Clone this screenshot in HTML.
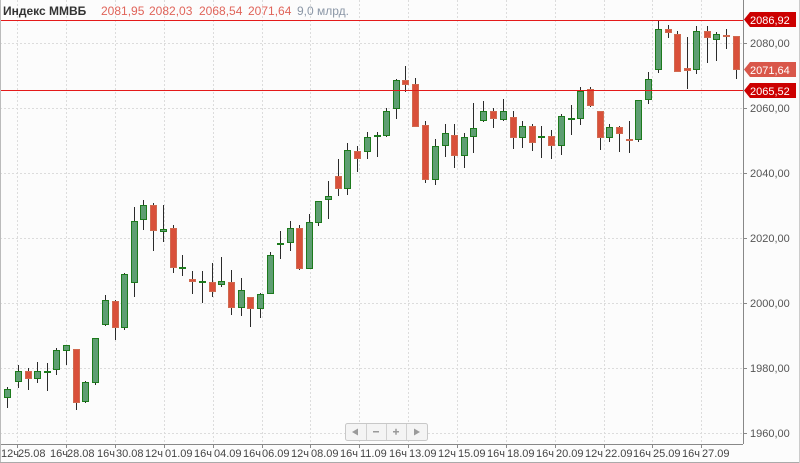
<!DOCTYPE html>
<html><head><meta charset="utf-8"><style>
html,body{margin:0;padding:0;background:#fcfcfc;}
svg{display:block;font-family:"Liberation Sans",Arial,sans-serif;}
.w{stroke:#2a2a2a;stroke-width:1}
.g{fill:#5e9e72;stroke:#1c7a1c;stroke-width:1}
.r{fill:#d9503a;stroke:#d06a50;stroke-width:1}
.ax{fill:#555;font-size:11px}
.bx{fill:#444;font-size:11px}
</style></head><body>
<svg width="800" height="463" viewBox="0 0 800 463" xmlns="http://www.w3.org/2000/svg">
<rect x="0" y="0" width="800" height="463" fill="#fcfcfc"/>
<g stroke="#dcdcdc" stroke-dasharray="2,2" stroke-width="1">
<line x1="0" y1="43.5" x2="743" y2="43.5"/><line x1="0" y1="108.5" x2="743" y2="108.5"/><line x1="0" y1="173.5" x2="743" y2="173.5"/><line x1="0" y1="238.5" x2="743" y2="238.5"/><line x1="0" y1="303.5" x2="743" y2="303.5"/><line x1="0" y1="368.5" x2="743" y2="368.5"/><line x1="0" y1="433.5" x2="743" y2="433.5"/>
<line x1="17.5" y1="0" x2="17.5" y2="444"/><line x1="66.5" y1="0" x2="66.5" y2="444"/><line x1="115.5" y1="0" x2="115.5" y2="444"/><line x1="164.5" y1="0" x2="164.5" y2="444"/><line x1="213.5" y1="0" x2="213.5" y2="444"/><line x1="262.5" y1="0" x2="262.5" y2="444"/><line x1="310.5" y1="0" x2="310.5" y2="444"/><line x1="359.5" y1="0" x2="359.5" y2="444"/><line x1="408.5" y1="0" x2="408.5" y2="444"/><line x1="457.5" y1="0" x2="457.5" y2="444"/><line x1="506.5" y1="0" x2="506.5" y2="444"/><line x1="555.5" y1="0" x2="555.5" y2="444"/><line x1="604.5" y1="0" x2="604.5" y2="444"/><line x1="652.5" y1="0" x2="652.5" y2="444"/><line x1="701.5" y1="0" x2="701.5" y2="444"/>
</g>
<!-- candles -->
<g>
<line class="w" x1="7.5" y1="387" x2="7.5" y2="408"/><rect class="g" x="4.5" y="389.5" width="6" height="8"/>
<line class="w" x1="18.5" y1="365" x2="18.5" y2="388"/><rect class="g" x="15.5" y="371.5" width="6" height="10"/>
<line class="w" x1="28.5" y1="368" x2="28.5" y2="390"/><rect class="r" x="25.5" y="371.5" width="6" height="7"/>
<line class="w" x1="37.5" y1="362" x2="37.5" y2="383"/><rect class="g" x="34.5" y="371.5" width="6" height="7"/>
<line class="w" x1="47.5" y1="363" x2="47.5" y2="391"/><rect class="g" x="44.5" y="371.5" width="6" height="1"/>
<line class="w" x1="56.5" y1="348" x2="56.5" y2="375"/><rect class="g" x="53.5" y="350.5" width="6" height="19"/>
<line class="w" x1="66.5" y1="345" x2="66.5" y2="365"/><rect class="g" x="63.5" y="345.5" width="6" height="5"/>
<line class="w" x1="76.5" y1="349" x2="76.5" y2="410"/><rect class="r" x="73.5" y="349.5" width="6" height="53"/>
<line class="w" x1="85.5" y1="381" x2="85.5" y2="403"/><rect class="g" x="82.5" y="382.5" width="6" height="19"/>
<line class="w" x1="95.5" y1="338" x2="95.5" y2="385"/><rect class="g" x="92.5" y="338.5" width="6" height="44"/>
<line class="w" x1="105.5" y1="295" x2="105.5" y2="326"/><rect class="g" x="102.5" y="300.5" width="6" height="24"/>
<line class="w" x1="115.5" y1="300" x2="115.5" y2="340"/><rect class="r" x="112.5" y="301.5" width="6" height="26"/>
<line class="w" x1="124.5" y1="273" x2="124.5" y2="330"/><rect class="g" x="121.5" y="274.5" width="6" height="53"/>
<line class="w" x1="134.5" y1="207" x2="134.5" y2="297"/><rect class="g" x="131.5" y="221.5" width="6" height="61"/>
<line class="w" x1="143.5" y1="200" x2="143.5" y2="230"/><rect class="g" x="140.5" y="205.5" width="6" height="14"/>
<line class="w" x1="153.5" y1="203" x2="153.5" y2="251"/><rect class="r" x="150.5" y="205.5" width="6" height="25"/>
<line class="w" x1="163.5" y1="205" x2="163.5" y2="242"/><rect class="g" x="160.5" y="229.5" width="6" height="2"/>
<line class="w" x1="173.5" y1="225" x2="173.5" y2="273"/><rect class="r" x="170.5" y="228.5" width="6" height="39"/>
<line class="w" x1="182.5" y1="255" x2="182.5" y2="276"/><rect class="g" x="179.5" y="267.5" width="6" height="1"/>
<line class="w" x1="192.5" y1="271" x2="192.5" y2="294"/><rect class="r" x="189.5" y="279.5" width="6" height="2"/>
<line class="w" x1="202.5" y1="271" x2="202.5" y2="303"/><rect class="g" x="199.5" y="281.5" width="6" height="1"/>
<line class="w" x1="212.5" y1="263" x2="212.5" y2="297"/><rect class="r" x="209.5" y="282.5" width="6" height="9"/>
<line class="w" x1="221.5" y1="257" x2="221.5" y2="287"/><rect class="g" x="218.5" y="281.5" width="6" height="3"/>
<line class="w" x1="231.5" y1="270" x2="231.5" y2="315"/><rect class="r" x="228.5" y="282.5" width="6" height="25"/>
<line class="w" x1="241.5" y1="278" x2="241.5" y2="316"/><rect class="g" x="238.5" y="290.5" width="6" height="17"/>
<line class="w" x1="250.5" y1="297" x2="250.5" y2="327"/><rect class="r" x="247.5" y="297.5" width="6" height="11"/>
<line class="w" x1="260.5" y1="293" x2="260.5" y2="318"/><rect class="g" x="257.5" y="294.5" width="6" height="14"/>
<line class="w" x1="270.5" y1="252" x2="270.5" y2="294"/><rect class="g" x="267.5" y="255.5" width="6" height="38"/>
<line class="w" x1="280.5" y1="231" x2="280.5" y2="259"/><rect class="g" x="277.5" y="243.5" width="6" height="1"/>
<line class="w" x1="290.5" y1="221" x2="290.5" y2="251"/><rect class="g" x="287.5" y="228.5" width="6" height="14"/>
<line class="w" x1="299.5" y1="225" x2="299.5" y2="270"/><rect class="r" x="296.5" y="228.5" width="6" height="40"/>
<line class="w" x1="309.5" y1="214" x2="309.5" y2="268"/><rect class="g" x="306.5" y="222.5" width="6" height="46"/>
<line class="w" x1="318.5" y1="201" x2="318.5" y2="226"/><rect class="g" x="315.5" y="201.5" width="6" height="21"/>
<line class="w" x1="328.5" y1="181" x2="328.5" y2="219"/><rect class="g" x="325.5" y="196.5" width="6" height="3"/>
<line class="w" x1="338.5" y1="159" x2="338.5" y2="196"/><rect class="r" x="335.5" y="176.5" width="6" height="12"/>
<line class="w" x1="347.5" y1="143" x2="347.5" y2="195"/><rect class="g" x="344.5" y="150.5" width="6" height="38"/>
<line class="w" x1="357.5" y1="146" x2="357.5" y2="172"/><rect class="r" x="354.5" y="151.5" width="6" height="7"/>
<line class="w" x1="367.5" y1="132" x2="367.5" y2="159"/><rect class="g" x="364.5" y="137.5" width="6" height="14"/>
<line class="w" x1="377.5" y1="132" x2="377.5" y2="157"/><rect class="g" x="374.5" y="135.5" width="6" height="1"/>
<line class="w" x1="386.5" y1="108" x2="386.5" y2="137"/><rect class="g" x="383.5" y="111.5" width="6" height="24"/>
<line class="w" x1="396.5" y1="79" x2="396.5" y2="119"/><rect class="g" x="393.5" y="80.5" width="6" height="28"/>
<line class="w" x1="405.5" y1="66" x2="405.5" y2="92"/><rect class="r" x="402.5" y="80.5" width="6" height="4"/>
<line class="w" x1="415.5" y1="78" x2="415.5" y2="126"/><rect class="r" x="412.5" y="84.5" width="6" height="42"/>
<line class="w" x1="425.5" y1="121" x2="425.5" y2="183"/><rect class="r" x="422.5" y="125.5" width="6" height="54"/>
<line class="w" x1="435.5" y1="139" x2="435.5" y2="185"/><rect class="g" x="432.5" y="146.5" width="6" height="33"/>
<line class="w" x1="445.5" y1="124" x2="445.5" y2="157"/><rect class="g" x="442.5" y="133.5" width="6" height="12"/>
<line class="w" x1="454.5" y1="124" x2="454.5" y2="168"/><rect class="r" x="451.5" y="135.5" width="6" height="20"/>
<line class="w" x1="464.5" y1="133" x2="464.5" y2="168"/><rect class="g" x="461.5" y="137.5" width="6" height="18"/>
<line class="w" x1="473.5" y1="103" x2="473.5" y2="153"/><rect class="g" x="470.5" y="128.5" width="6" height="8"/>
<line class="w" x1="483.5" y1="101" x2="483.5" y2="122"/><rect class="g" x="480.5" y="111.5" width="6" height="9"/>
<line class="w" x1="493.5" y1="108" x2="493.5" y2="128"/><rect class="r" x="490.5" y="111.5" width="6" height="7"/>
<line class="w" x1="503.5" y1="99" x2="503.5" y2="121"/><rect class="g" x="500.5" y="111.5" width="6" height="8"/>
<line class="w" x1="513.5" y1="111" x2="513.5" y2="149"/><rect class="r" x="510.5" y="117.5" width="6" height="20"/>
<line class="w" x1="522.5" y1="121" x2="522.5" y2="148"/><rect class="g" x="519.5" y="126.5" width="6" height="11"/>
<line class="w" x1="532.5" y1="124" x2="532.5" y2="151"/><rect class="r" x="529.5" y="126.5" width="6" height="16"/>
<line class="w" x1="541.5" y1="126" x2="541.5" y2="158"/><rect class="g" x="538.5" y="136.5" width="6" height="1"/>
<line class="w" x1="551.5" y1="130" x2="551.5" y2="159"/><rect class="r" x="548.5" y="136.5" width="6" height="9"/>
<line class="w" x1="561.5" y1="114" x2="561.5" y2="155"/><rect class="g" x="558.5" y="116.5" width="6" height="29"/>
<line class="w" x1="571.5" y1="105" x2="571.5" y2="135"/><rect class="g" x="568.5" y="118.5" width="6" height="1"/>
<line class="w" x1="580.5" y1="87" x2="580.5" y2="125"/><rect class="g" x="577.5" y="91.5" width="6" height="27"/>
<line class="w" x1="590.5" y1="87" x2="590.5" y2="107"/><rect class="r" x="587.5" y="89.5" width="6" height="16"/>
<line class="w" x1="600.5" y1="111" x2="600.5" y2="150"/><rect class="r" x="597.5" y="111.5" width="6" height="26"/>
<line class="w" x1="609.5" y1="124" x2="609.5" y2="142"/><rect class="g" x="606.5" y="127.5" width="6" height="10"/>
<line class="w" x1="619.5" y1="126" x2="619.5" y2="152"/><rect class="r" x="616.5" y="127.5" width="6" height="6"/>
<line class="w" x1="629.5" y1="121" x2="629.5" y2="153"/><rect class="r" x="626.5" y="139.5" width="6" height="1"/>
<line class="w" x1="638.5" y1="100" x2="638.5" y2="142"/><rect class="g" x="635.5" y="100.5" width="6" height="39"/>
<line class="w" x1="648.5" y1="72" x2="648.5" y2="104"/><rect class="g" x="645.5" y="79.5" width="6" height="20"/>
<line class="w" x1="658.5" y1="21" x2="658.5" y2="73"/><rect class="g" x="655.5" y="29.5" width="6" height="40"/>
<line class="w" x1="668.5" y1="25" x2="668.5" y2="38"/><rect class="r" x="665.5" y="29.5" width="6" height="3"/>
<line class="w" x1="677.5" y1="31" x2="677.5" y2="72"/><rect class="r" x="674.5" y="34.5" width="6" height="37"/>
<line class="w" x1="687.5" y1="37" x2="687.5" y2="89"/><rect class="r" x="684.5" y="68.5" width="6" height="2"/>
<line class="w" x1="696.5" y1="26" x2="696.5" y2="74"/><rect class="g" x="693.5" y="31.5" width="6" height="38"/>
<line class="w" x1="707.5" y1="26" x2="707.5" y2="63"/><rect class="r" x="704.5" y="31.5" width="6" height="6"/>
<line class="w" x1="716.5" y1="32" x2="716.5" y2="61"/><rect class="g" x="713.5" y="34.5" width="6" height="5"/>
<line class="w" x1="726.5" y1="29" x2="726.5" y2="49"/><rect class="r" x="723.5" y="35.5" width="6" height="1"/>
<line class="w" x1="736.5" y1="36" x2="736.5" y2="79"/><rect class="r" x="733.5" y="36.5" width="6" height="33"/>
</g>
<!-- red level lines -->
<line x1="0" y1="20.5" x2="743" y2="20.5" stroke="#e41a1a" stroke-width="1"/>
<line x1="0" y1="90.5" x2="743" y2="90.5" stroke="#e41a1a" stroke-width="1"/>
<!-- axes -->
<line x1="743.5" y1="0" x2="743.5" y2="444" stroke="#888"/>
<line x1="0" y1="444.5" x2="743" y2="444.5" stroke="#888"/>
<line x1="0.5" y1="0" x2="0.5" y2="463" stroke="#bbb"/>
<line x1="0" y1="462.5" x2="800" y2="462.5" stroke="#aaa"/>
<line x1="799.5" y1="0" x2="799.5" y2="463" stroke="#ccc"/>
<g stroke="#888">
<line x1="743" y1="43.5" x2="747" y2="43.5"/><line x1="743" y1="108.5" x2="747" y2="108.5"/><line x1="743" y1="173.5" x2="747" y2="173.5"/><line x1="743" y1="238.5" x2="747" y2="238.5"/><line x1="743" y1="303.5" x2="747" y2="303.5"/><line x1="743" y1="368.5" x2="747" y2="368.5"/><line x1="743" y1="433.5" x2="747" y2="433.5"/>
<line x1="17.5" y1="444" x2="17.5" y2="448"/><line x1="66.5" y1="444" x2="66.5" y2="448"/><line x1="115.5" y1="444" x2="115.5" y2="448"/><line x1="164.5" y1="444" x2="164.5" y2="448"/><line x1="213.5" y1="444" x2="213.5" y2="448"/><line x1="262.5" y1="444" x2="262.5" y2="448"/><line x1="310.5" y1="444" x2="310.5" y2="448"/><line x1="359.5" y1="444" x2="359.5" y2="448"/><line x1="408.5" y1="444" x2="408.5" y2="448"/><line x1="457.5" y1="444" x2="457.5" y2="448"/><line x1="506.5" y1="444" x2="506.5" y2="448"/><line x1="555.5" y1="444" x2="555.5" y2="448"/><line x1="604.5" y1="444" x2="604.5" y2="448"/><line x1="652.5" y1="444" x2="652.5" y2="448"/><line x1="701.5" y1="444" x2="701.5" y2="448"/>
</g>
<g class="ax">
<text x="750" y="47">2080,00</text><text x="750" y="112">2060,00</text><text x="750" y="177">2040,00</text><text x="750" y="242">2020,00</text><text x="750" y="307">2000,00</text><text x="750" y="372">1980,00</text><text x="750" y="437">1960,00</text>
</g>
<!-- price tags -->
<path d="M744 19.5 L750 12 L796 12 L796 27 L750 27 Z" fill="#cc0000"/>
<text x="750" y="24" fill="#fff" font-size="11">2086,92</text>
<path d="M744 69.5 L750 62 L796 62 L796 77 L750 77 Z" fill="#d9574a"/>
<text x="750" y="74" fill="#fff" font-size="11">2071,64</text>
<path d="M744 90.5 L750 83 L796 83 L796 98 L750 98 Z" fill="#cc0000"/>
<text x="750" y="95" fill="#fff" font-size="11">2065,52</text>
<!-- bottom labels -->
<g class="bx">
<text x="1" y="457">12ч</text><text x="18" y="457">25.08</text>
<text x="50" y="457">16ч</text><text x="67" y="457">28.08</text>
<text x="97" y="457">16ч</text><text x="116" y="457">30.08</text>
<text x="145" y="457">12ч</text><text x="165" y="457">01.09</text>
<text x="194" y="457">16ч</text><text x="214" y="457">04.09</text>
<text x="243" y="457">16ч</text><text x="262" y="457">06.09</text>
<text x="291" y="457">12ч</text><text x="311" y="457">08.09</text>
<text x="340" y="457">16ч</text><text x="360" y="457">11.09</text>
<text x="389" y="457">16ч</text><text x="409" y="457">13.09</text>
<text x="438" y="457">12ч</text><text x="458" y="457">15.09</text>
<text x="487" y="457">16ч</text><text x="507" y="457">18.09</text>
<text x="536" y="457">16ч</text><text x="556" y="457">20.09</text>
<text x="585" y="457">12ч</text><text x="605" y="457">22.09</text>
<text x="633" y="457">16ч</text><text x="653" y="457">25.09</text>
<text x="682" y="457">16ч</text><text x="702" y="457">27.09</text>
</g>
<!-- nav -->
<rect x="345.5" y="423.5" width="82" height="17" rx="2" fill="#f4f4f4" stroke="#c8c8c8"/>
<g stroke="#d0d0d0"><line x1="366.5" y1="424" x2="366.5" y2="440"/><line x1="386.5" y1="424" x2="386.5" y2="440"/><line x1="406.5" y1="424" x2="406.5" y2="440"/></g>
<path d="M352 432 L358 428.5 L358 435.5 Z" fill="#9a9a9a"/>
<rect x="373" y="431" width="6" height="1.5" fill="#9a9a9a"/>
<rect x="393" y="431" width="6" height="1.5" fill="#9a9a9a"/><rect x="395.25" y="428.75" width="1.5" height="6" fill="#9a9a9a"/>
<path d="M420 432 L414 428.5 L414 435.5 Z" fill="#9a9a9a"/>
<!-- header -->
<text x="3" y="15" font-size="12" font-weight="bold" fill="#333">Индекс ММВБ</text>
<text x="101" y="15" font-size="12" fill="#e0645a">2081,95</text>
<text x="149" y="15" font-size="12" fill="#e0645a">2082,03</text>
<text x="199" y="15" font-size="12" fill="#e0645a">2068,54</text>
<text x="248" y="15" font-size="12" fill="#e0645a">2071,64</text>
<text x="297" y="15" font-size="12" fill="#8a96a6">9,0 млрд.</text>
</svg>
</body></html>
